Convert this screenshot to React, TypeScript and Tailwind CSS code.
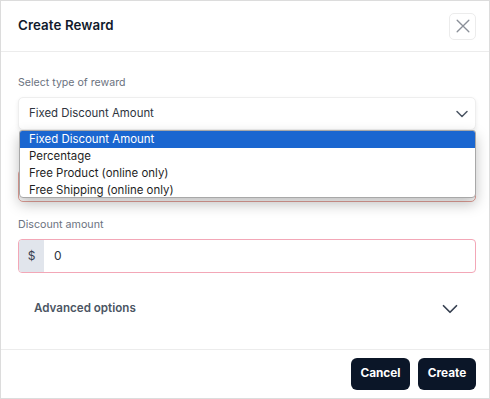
import React from "react";

function ChevronDown({ className, sw = 2 }: { className?: string; sw?: number }) {
  return (
    <svg viewBox="0 0 24 24" className={className} fill="none" stroke="currentColor" strokeWidth={sw} strokeLinecap="round" strokeLinejoin="round">
      <path d="M6 9l6 6 6-6" />
    </svg>
  );
}

export default function App() {
  return (
    <div
      className="w-[490px] h-[399px] bg-white border border-[#dcdcdc] flex flex-col overflow-hidden"
      style={{ fontFamily: "Inter, 'Noto Sans', sans-serif" }}
    >
      {/* Header */}
      <div className="h-[51px] shrink-0 flex items-center justify-between pl-[17px] pr-[13px] border-b border-[#ececec]">
        <h1 className="text-[13.3px] font-semibold text-[#111a2c] tracking-[0.1px]">Create Reward</h1>
        <button className="w-[27px] h-[27px] flex items-center justify-center rounded-[5px] border border-[#ececec] text-[#8a8f98]">
          <svg viewBox="0 0 24 24" className="w-[20px] h-[20px]" fill="none" stroke="currentColor" strokeWidth={1.6} strokeLinecap="round">
            <path d="M5 5l14 14M19 5L5 19" />
          </svg>
        </button>
      </div>

      {/* Body */}
      <div className="flex-1 relative pl-[17px] pr-[13px] pt-[23px]">
        <div className="flex flex-col gap-[15px]">
          <div>
            <label className="block text-[10.6px] leading-4 text-[#6b7280]">Select type of reward</label>
            <div className="mt-[6px] h-[33px] rounded-[5px] border border-[#eeeeee] shadow-[0_2px_4px_rgba(0,0,0,0.08)] flex items-center justify-between pl-[10px] pr-[3px] bg-white">
              <span className="text-[11.4px] text-[#2d3440]">Fixed Discount Amount</span>
              <ChevronDown className="w-[20px] h-[20px] text-[#4b5563]" sw={1.8} />
            </div>
          </div>
          <div>
            <div className="h-4" />
            <div className="mt-2 h-[33px] rounded-[5px] border border-[#e6a39b] bg-white" />
          </div>
          <div>
            <label className="block text-[10.7px] leading-4 text-[#6b7280]">Discount amount</label>
            <div className="mt-[6px] h-[34px] rounded-[4px] border border-[#f3a7b7] flex overflow-hidden bg-white">
              <div className="w-[25px] bg-[#e1e5ec] flex items-center justify-center text-[12px] text-[#374151]">$</div>
              <div className="flex items-center pl-[10px] text-[12px] text-[#2d3440]">0</div>
            </div>
          </div>
        </div>

        <div className="mt-[23px] pl-[16px] pr-[13px] flex items-center justify-between">
          <span className="text-[11.6px] font-semibold text-[#4b5563]">Advanced options</span>
          <ChevronDown className="w-[26px] h-[26px] text-[#374151]" sw={1.6} />
        </div>

        {/* Open dropdown list */}
        <div className="absolute left-[18px] top-[78px] w-[457px] h-[68px] bg-white border border-[#a8a8a8] rounded-b-[4px] rounded-t-[3px] shadow-[0_6px_14px_rgba(0,0,0,0.25)] overflow-hidden text-[11.45px] leading-[17px] text-[#1f1f1f]">
          <div className="bg-[#1a66d0] text-white pl-[9px]">Fixed Discount Amount</div>
          <div className="pl-[9px]">Percentage</div>
          <div className="pl-[9px]">Free Product (online only)</div>
          <div className="pl-[9px]">Free Shipping (online only)</div>
        </div>
      </div>

      {/* Footer */}
      <div className="h-[49px] shrink-0 border-t border-[#ececec] flex items-center justify-end gap-[8px] pr-[13px]">
        <button className="h-[32px] w-[59px] rounded-[6px] bg-[#0b1628] text-white text-[11.8px] font-bold">Cancel</button>
        <button className="h-[32px] w-[58px] rounded-[6px] bg-[#0b1628] text-white text-[11.8px] font-bold">Create</button>
      </div>
    </div>
  );
}
